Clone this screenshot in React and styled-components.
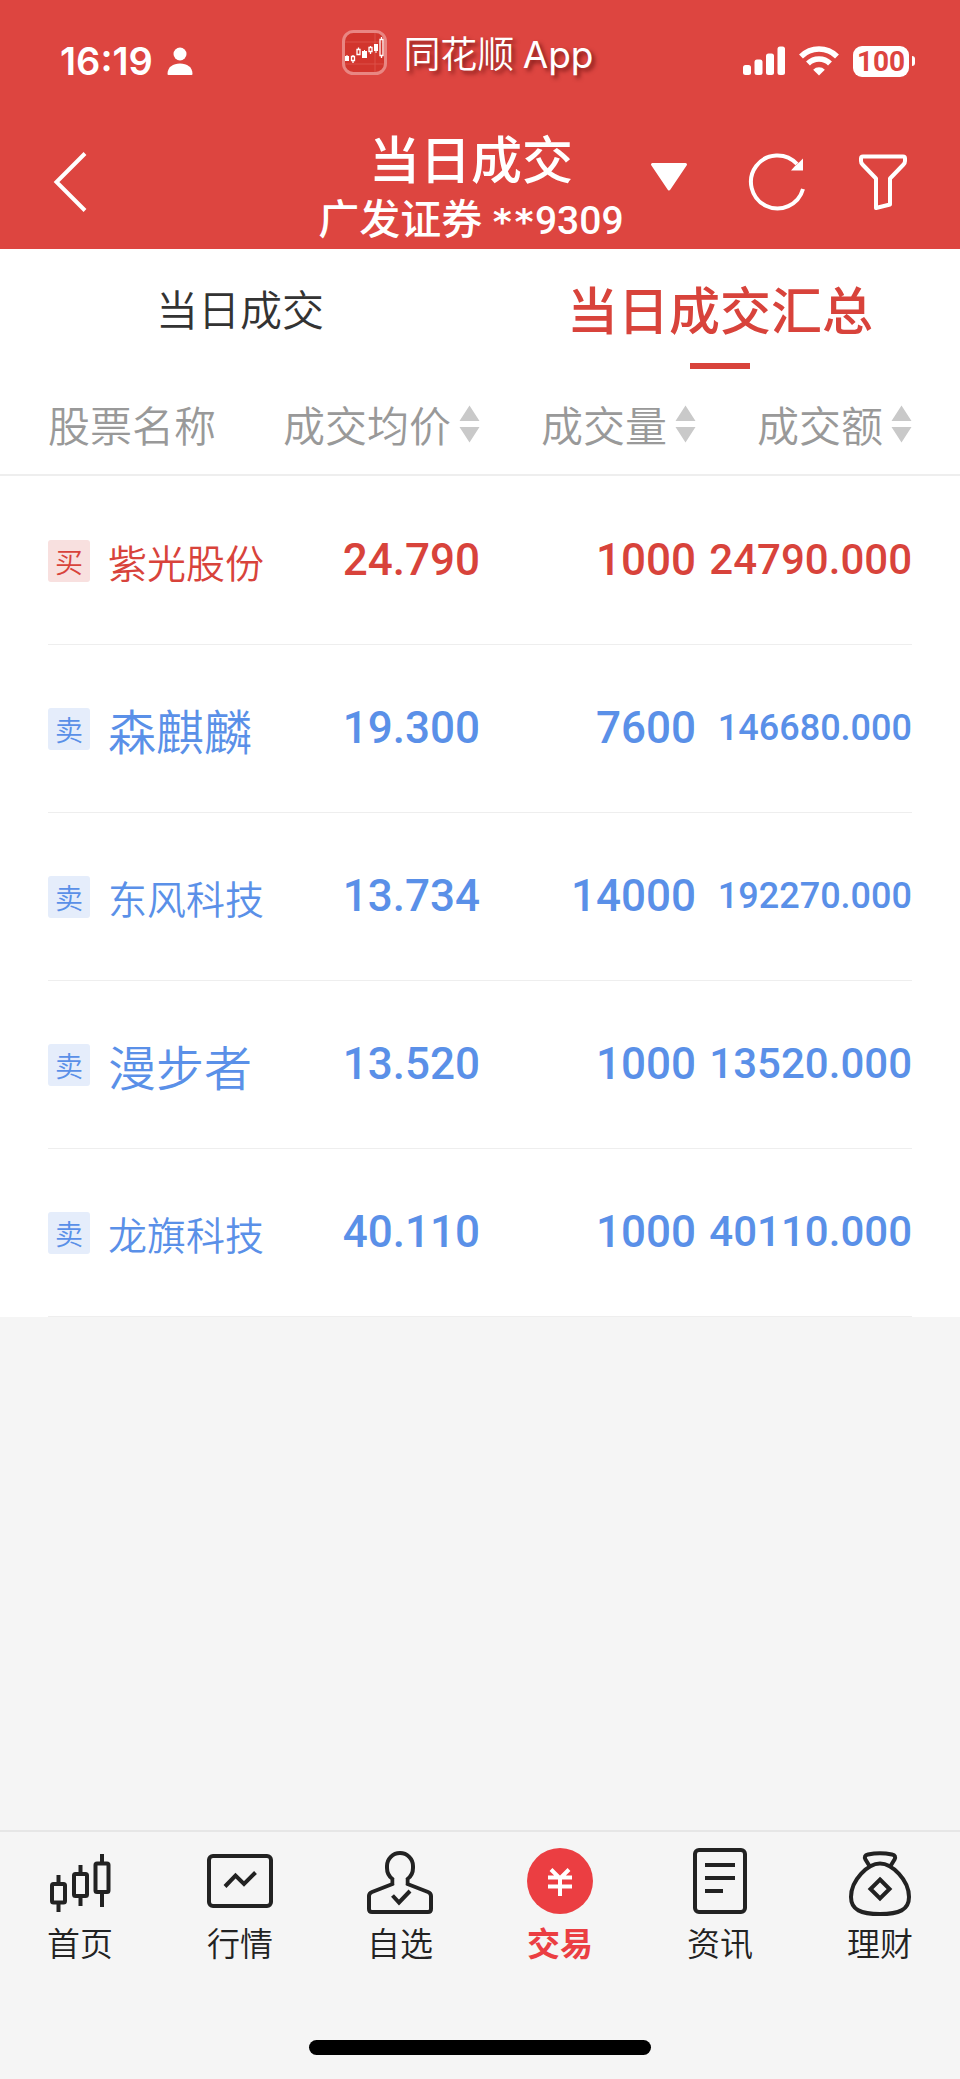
import React, { useState } from "react";
import styled, { createGlobalStyle, css } from "styled-components";

const cjk = `"Noto Sans CJK SC", sans-serif`;
const red = "#d8433b";
const blue = "#5a90e8";

const GlobalStyle = createGlobalStyle`
  * { box-sizing: border-box; }
  body { margin: 0; background: #f5f5f5; font-family: ${cjk}; }
  button { border: 0; padding: 0; background: none; font: inherit; color: inherit; cursor: pointer; }
  svg { display: block; flex: none; overflow: visible; }
`;

const Page = styled.div`
  min-height: 100vh;
  display: flex;
  flex-direction: column;
`;

const Header = styled.header`
  background: #dd4540;
  color: #fff;
`;

const StatusBar = styled.div`
  height: 127px;
  padding: 30px 45px 0 60px;
  display: flex;
  justify-content: space-between;
  align-items: flex-start;
`;

const StatusGroup = styled.div`
  display: flex;
  align-items: center;
  gap: 14px;
  height: 62px;
`;

const Clock = styled.span`
  font: 600 38px/48px Inter, sans-serif;
`;

const AppBadge = styled.div`
  display: flex;
  align-items: flex-start;
  gap: 16px;
  font: 350 37px/45px ${cjk};
  text-shadow: 3px 3px 4px rgba(70, 0, 0, 0.6);
`;

const Latin = styled.span`
  font-family: Inter, sans-serif;
  font-weight: 400;
`;

const Battery = styled.span`
  display: flex;
  align-items: center;
  gap: 3px;
  &::after {
    content: "";
    width: 3px;
    height: 10px;
    border-radius: 0 4px 4px 0;
    background: #fff;
  }
`;

const BatteryLevel = styled.span`
  width: 56px;
  border-radius: 9px;
  background: #fff;
  color: #dd4540;
  text-align: center;
  font: 700 28px/31px Roboto, sans-serif;
`;

const NavBar = styled.nav`
  display: grid;
  grid-template-columns: 1fr auto 1fr;
  align-items: center;
  padding: 0 53px 0 35px;
`;

const BackButton = styled.button`
  justify-self: start;
  padding: 0 20px 12px;
`;

const Titles = styled.div`
  text-align: center;
`;

const Title = styled.h1`
  margin: 0;
  font-size: 51px;
  line-height: 60px;
  font-weight: 500;
`;

const Account = styled.div`
  height: 62px;
  font-size: 41px;
  line-height: 59px;
  font-weight: 500;
`;

const AccountNumber = styled.span`
  font-family: Roboto, sans-serif;
  font-size: 39px;
`;

const Mask = styled.span`
  font-family: "DejaVu Sans Mono", monospace;
  font-size: 36px;
  font-weight: 700;
`;

const NavActions = styled.div`
  display: flex;
  align-items: center;
  justify-content: flex-end;
  gap: 51px;
  padding-bottom: 12px;
`;

const Tabs = styled.div`
  display: flex;
  background: #fff;
`;

const Tab = styled.button`
  flex: 1;
  height: 126px;
  display: flex;
  flex-direction: column;
  align-items: center;
  justify-content: flex-end;
  gap: 22px;
  padding-bottom: 6px;
  font-size: 42px;
  font-weight: 350;
  line-height: 66px;
  color: #333;
  &::after {
    content: "";
    width: 60px;
    height: 6px;
    background: transparent;
  }
  ${(p) =>
    p.$active &&
    css`
      color: ${red};
      font-size: 51px;
      font-weight: 500;
      &::after { background: ${red}; }
    `}
`;

const Table = styled.table`
  display: block;
  background: #fff;
`;

const TableHead = styled.thead`
  display: block;
  padding: 0 48px;
  border-bottom: 2px solid #eee;
`;

const TableBody = styled.tbody`
  display: block;
  padding: 1px 48px 0;
`;

const Row = styled.tr`
  display: grid;
  grid-template-columns: repeat(4, 1fr);
  align-items: center;
`;

const HeadRow = styled(Row)`
  height: 99px;
  padding-bottom: 2px;
`;

const DataRow = styled(Row)`
  height: 168px;
  border-bottom: 1px solid #eee;
  color: ${(p) => (p.$side === "买" ? red : blue)};
`;

const HeadCell = styled.th`
  display: flex;
  justify-content: ${(p) => (p.$first ? "flex-start" : "flex-end")};
  padding: 0;
  font-size: 42px;
  line-height: 58px;
  font-weight: 350;
  color: #999;
  white-space: nowrap;
`;

const SortButton = styled.button`
  display: flex;
  align-items: center;
  gap: 8px;
`;

const StockCell = styled.th`
  display: flex;
  align-items: center;
  gap: 18px;
  padding: 0;
  font-weight: 350;
  white-space: nowrap;
`;

const SideTag = styled.span`
  width: 42px;
  height: 42px;
  border-radius: 3px;
  text-align: center;
  font-size: 28px;
  line-height: 42px;
  background: ${(p) => (p.$side === "买" ? "#f8e0df" : "#e5edfb")};
`;

const StockName = styled.span`
  font-size: ${(p) => (p.$short ? 48 : 39)}px;
  line-height: 58px;
`;

const NumberCell = styled.td`
  padding: 0 0 2px;
  text-align: right;
  font-family: Roboto, sans-serif;
  font-weight: 500;
  font-size: ${(p) => p.$size || 44}px;
  line-height: 54px;
  white-space: nowrap;
`;

const TabBar = styled.nav`
  margin-top: auto;
  border-top: 2px solid #e6e6e6;
  padding: 16px 0 24px;
`;

const TabBarItems = styled.div`
  display: flex;
`;

const TabBarItem = styled.button`
  flex: 1;
  display: flex;
  flex-direction: column;
  align-items: center;
  gap: 4px;
  font-size: 33px;
  line-height: 48px;
  color: ${(p) => (p.$active ? "#eb3e42" : "#222")};
  font-weight: ${(p) => (p.$active ? 700 : 350)};
`;

const HomeIndicator = styled.div`
  width: 342px;
  height: 15px;
  margin: 74px auto 0;
  border-radius: 8px;
  background: #000;
`;

const PersonIcon = () => (
  <svg width="26" height="28" viewBox="0 0 26 28" fill="#fff" aria-hidden="true">
    <circle cx="13" cy="7" r="6.5" />
    <path d="M.5 27C.5 20 6 16.500 13 16.500S25.500 20 25.500 27Q25.500 28 24.500 28H1.500Q.5 28 .5 27Z" />
  </svg>
);

const AppLogo = () => (
  <svg width="45" height="45" viewBox="0 0 45 45" fill="none" aria-hidden="true">
    <rect x="1.500" y="1.500" width="42" height="42" rx="10" fill="#d2352d" stroke="#e98682" strokeWidth="3" />
    <path d="M3 12H42M3 34H42M33 3V42" stroke="#dc5049" />
    <g fill="#fff">
      <path d="M3 26h4v5H3zM20 21h5v7h-5zM32 14h4v7h-4z" />
      <path d="M4.500 25h1v2h-1zM22 20h1v2h-1zM33.500 21h1v2h-1z" />
    </g>
    <path d="M9.500 26.500h3v4h-3zM15 19.500h3v5h-3zM27 17.500h3v4h-3zM38 9.500h3v16h-3zM11 25v1M11 31v2M16.500 17.500v2M28.500 16v1M28.500 22v2M39.500 7v2M39.500 26v2" stroke="#fff" strokeWidth="1.300" />
  </svg>
);

const SignalIcon = () => (
  <svg width="42" height="30" viewBox="0 0 42 30" fill="#fff" aria-hidden="true">
    <rect x="0" y="19" width="8" height="10" rx="2.500" />
    <rect x="11.500" y="13.500" width="8" height="15.500" rx="2.500" />
    <rect x="23" y="7.500" width="8" height="21.500" rx="2.500" />
    <rect x="34.500" y="0.500" width="7.500" height="28.500" rx="2.500" />
  </svg>
);

const WifiIcon = () => (
  <svg width="40" height="30" viewBox="0 0 40 30" fill="none" stroke="#fff" strokeWidth="5.500" aria-hidden="true">
    <path d="M2 10.500A25.500 25.500 0 0 1 38 10.500" />
    <path d="M9 17.500A15.500 15.500 0 0 1 31 17.500" />
    <path d="M20 29.500L14.200 23.700A8.200 8.200 0 0 1 25.800 23.700Z" fill="#fff" stroke="none" />
  </svg>
);

const BackIcon = () => (
  <svg width="34" height="60" viewBox="0 0 34 60" fill="none" stroke="#fff" strokeWidth="4" aria-hidden="true">
    <path d="M30 1.500L1.500 30L30 58.500" />
  </svg>
);

const DropIcon = () => (
  <svg width="44" height="42" viewBox="0 0 44 42" aria-hidden="true">
    <path d="M3.500 3.500H36.500L20 28Z" fill="#fff" stroke="#fff" strokeWidth="3" strokeLinejoin="round" />
  </svg>
);

const RefreshIcon = () => (
  <svg width="64" height="60" viewBox="0 0 64 60" fill="none" stroke="#fff" strokeWidth="4" aria-hidden="true">
    <path d="M59 37A26.500 26.500 0 1 1 53 12" />
    <path d="M47 18.500H59V6.500L55 10.500L51 14Z" fill="#fff" stroke="none" />
  </svg>
);

const FilterIcon = () => (
  <svg width="48" height="56" viewBox="0 0 48 56" fill="none" stroke="#fff" strokeWidth="4" strokeLinejoin="round" aria-hidden="true">
    <path d="M4 2.500H44Q46 2.500 46 4.500V7Q46 9 44.500 10.500L31 24.500V50.500L17 54V24.500L3.500 10.500Q2 9 2 7V4.500Q2 2.500 4 2.500Z" />
  </svg>
);

const SortIcon = () => (
  <svg width="21" height="38" viewBox="0 0 21 38" fill="#c9c9c9" aria-hidden="true">
    <path d="M10.500 0.500L20.500 16H.5ZM10.500 37.500L20.500 22H.5Z" />
  </svg>
);

const TabIcon = ({ children }) => (
  <svg width="66" height="66" viewBox="0 0 66 66" fill="none" stroke="#222" strokeWidth="4" aria-hidden="true">
    {children}
  </svg>
);

const tabBarItems = [
  {
    label: "首页",
    icon: (
      <TabIcon>
        <rect x="5" y="36" width="13" height="18.500" rx="1.500" />
        <rect x="27" y="26" width="13" height="22" rx="1.500" />
        <rect x="48.500" y="15.500" width="13" height="28.500" rx="1.500" />
        <path d="M11.500 27V36M11.500 54V64M33.500 17V26M33.500 48V58M55 6V15M55 44V59" />
      </TabIcon>
    ),
  },
  {
    label: "行情",
    icon: (
      <TabIcon>
        <rect x="2" y="8" width="62" height="50" rx="4" />
        <path d="M18 38.500L28.500 27.500L37 36L48.500 24.500" />
      </TabIcon>
    ),
  },
  {
    label: "自选",
    icon: (
      <TabIcon>
        <path
          d="M25.500 31Q20 27 20 20V18A13 13 0 0 1 46 18V20Q46 27 40.500 31V36L61 44Q64 45.200 64 48V61Q64 64 61 64H5Q2 64 2 61V48Q2 45.200 5 44L25.500 36Z"
          strokeLinejoin="round"
        />
        <path d="M33 36V31" stroke="#f5f5f5" strokeWidth="11" />
        <path d="M25.500 47.500L32 54.500L43 43" />
      </TabIcon>
    ),
  },
  {
    label: "交易",
    icon: (
      <TabIcon>
        <circle cx="33" cy="33" r="33" fill="#eb3e42" stroke="none" />
        <path d="M24 21.500L33 30.500L42 21.500M33 29V48M21 29.500H45M21 38.500H45" stroke="#fff" />
      </TabIcon>
    ),
  },
  {
    label: "资讯",
    icon: (
      <TabIcon>
        <rect x="8" y="2" width="50" height="62" rx="4" />
        <path d="M18 17H48M18 30H48M18 43H36" />
      </TabIcon>
    ),
  },
  {
    label: "理财",
    icon: (
      <TabIcon>
        <path d="M33 15.500C45 15.500 62 32 62 49C62 62 52 66 33 66S4 62 4 49C4 32 21 15.500 33 15.500Z" />
        <path d="M22.500 18L18.500 11.500Q16.500 7.500 21 6.500Q33 4 45 6.500Q49.500 7.500 47.500 11.500L43.500 18" />
        <path d="M33 31.500L42.500 41L33 50.500L23.500 41Z" />
      </TabIcon>
    ),
  },
];

const deals = [
  { side: "买", name: "紫光股份", price: "24.790", volume: "1000", amount: "24790.000" },
  { side: "卖", name: "森麒麟", price: "19.300", volume: "7600", amount: "146680.000" },
  { side: "卖", name: "东风科技", price: "13.734", volume: "14000", amount: "192270.000" },
  { side: "卖", name: "漫步者", price: "13.520", volume: "1000", amount: "13520.000" },
  { side: "卖", name: "龙旗科技", price: "40.110", volume: "1000", amount: "40110.000" },
];

export default function App() {
  const [tab, setTab] = useState("当日成交汇总");
  return (
    <Page lang="zh-CN">
      <GlobalStyle />
      <Header>
        <StatusBar>
          <StatusGroup>
            <Clock>16:19</Clock>
            <PersonIcon />
          </StatusGroup>
          <AppBadge>
            <AppLogo />
            <span>
              同花顺 <Latin>App</Latin>
            </span>
          </AppBadge>
          <StatusGroup>
            <SignalIcon />
            <WifiIcon />
            <Battery>
              <BatteryLevel>100</BatteryLevel>
            </Battery>
          </StatusGroup>
        </StatusBar>
        <NavBar>
          <BackButton aria-label="返回">
            <BackIcon />
          </BackButton>
          <Titles>
            <Title>当日成交</Title>
            <Account>
              广发证券{" "}
              <AccountNumber>
                <Mask>**</Mask>9309
              </AccountNumber>
            </Account>
          </Titles>
          <NavActions>
            <button aria-label="切换账户">
              <DropIcon />
            </button>
            <button aria-label="刷新">
              <RefreshIcon />
            </button>
            <button aria-label="筛选">
              <FilterIcon />
            </button>
          </NavActions>
        </NavBar>
      </Header>

      <main>
        <Tabs role="tablist">
          {["当日成交", "当日成交汇总"].map((name) => (
            <Tab key={name} role="tab" aria-selected={tab === name} $active={tab === name} onClick={() => setTab(name)}>
              {name}
            </Tab>
          ))}
        </Tabs>
        <Table>
          <TableHead>
            <HeadRow>
              <HeadCell $first>股票名称</HeadCell>
              {["成交均价", "成交量", "成交额"].map((name) => (
                <HeadCell key={name}>
                  <SortButton>
                    {name}
                    <SortIcon />
                  </SortButton>
                </HeadCell>
              ))}
            </HeadRow>
          </TableHead>
          <TableBody>
            {deals.map((d) => (
              <DataRow key={d.name} $side={d.side}>
                <StockCell scope="row">
                  <SideTag $side={d.side}>{d.side}</SideTag>
                  <StockName $short={d.name.length < 4}>{d.name}</StockName>
                </StockCell>
                <NumberCell>{d.price}</NumberCell>
                <NumberCell>{d.volume}</NumberCell>
                <NumberCell $size={d.amount.length > 9 ? 36 : 42}>{d.amount}</NumberCell>
              </DataRow>
            ))}
          </TableBody>
        </Table>
      </main>

      <TabBar>
        <TabBarItems>
          {tabBarItems.map((item) => (
            <TabBarItem key={item.label} $active={item.label === "交易"}>
              {item.icon}
              {item.label}
            </TabBarItem>
          ))}
        </TabBarItems>
        <HomeIndicator />
      </TabBar>
    </Page>
  );
}
